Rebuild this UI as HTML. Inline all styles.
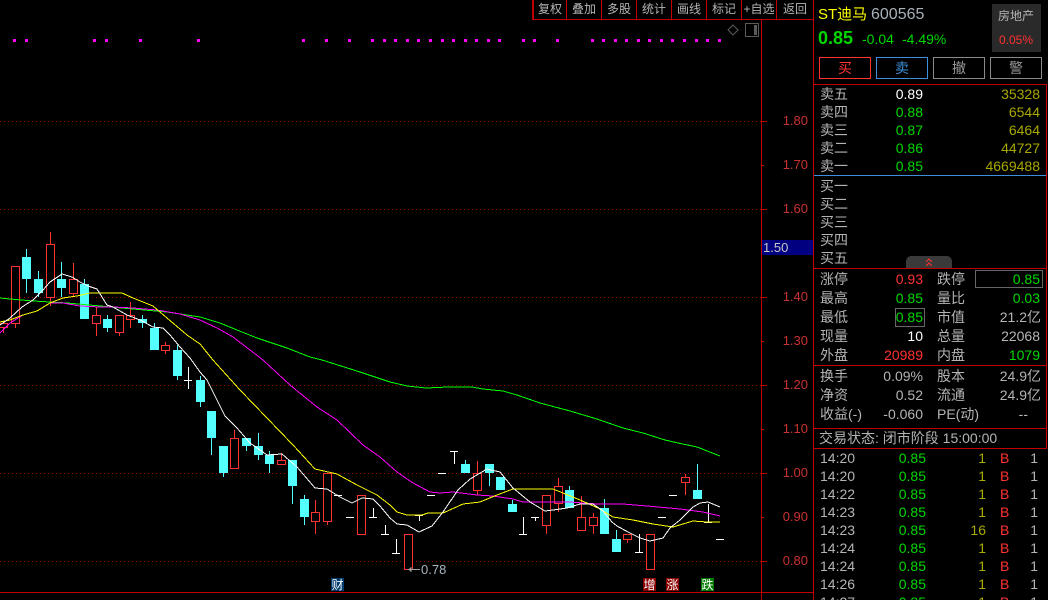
<!DOCTYPE html>
<html><head><meta charset="utf-8"><title>ST迪马</title>
<style>
html,body{margin:0;padding:0;background:#000;width:1048px;height:600px;overflow:hidden}
svg{display:block}
text{font-family:"Liberation Sans","WenQuanYi Zen Hei","Noto Sans CJK SC",sans-serif;font-size:14px;fill:#b4b4b4}
.e{text-anchor:end}.g{fill:#00d800}.r{fill:#ff3232}.y{fill:#a8a800}.w{fill:#fff}.c{text-anchor:middle}
.t text{font-size:12px;text-anchor:middle}
.a text{font-size:13px;fill:#c83232;text-anchor:end}
</style></head><body>
<svg width="1048" height="600" viewBox="0 0 1048 600" xmlns="http://www.w3.org/2000/svg">
<g shape-rendering="crispEdges">
<!-- grid -->
<path d="M0 121.5H761M0 209.5H761M0 297.5H761M0 385.5H761M0 473.5H761M0 561.5H761" stroke="#a00000" stroke-dasharray="1 3" fill="none"/>
<path d="M761 121.5h6M761 209.5h6M761 297.5h6M761 385.5h6M761 473.5h6M761 561.5h6M761 165.5h3M761 253.5h3M761 341.5h3M761 429.5h3M761 517.5h3" stroke="#c00000" fill="none"/>
<!-- frame -->
<path d="M532.5 0V19M533.5 0V19M566.5 0V19M601.5 0V19M636.5 0V19M671.5 0V19M706.5 0V19M741.5 0V19M776.5 0V19M532 19.5H813M761.5 19V600M0 592.5H813M813.5 0V600M814 84.5H1046M814 268.5H1046M814 365.5H1046M814 428.5H1046M814 448.5H1046M1046.5 84V449" stroke="#c00000" fill="none"/>
<path d="M814 175.5H1046" stroke="#3c8fd8" fill="none"/>
<!-- magenta dots -->
<path fill="#ff00ff" d="M13 39h3v3h-3zM25 39h3v3h-3zM93 39h3v3h-3zM105 39h3v3h-3zM139 39h3v3h-3zM197 39h3v3h-3zM302 39h3v3h-3zM325 39h3v3h-3zM348 39h3v3h-3zM371 39h3v3h-3zM383 39h3v3h-3zM394 39h3v3h-3zM406 39h3v3h-3zM417 39h3v3h-3zM429 39h3v3h-3zM441 39h3v3h-3zM452 39h3v3h-3zM464 39h3v3h-3zM475 39h3v3h-3zM487 39h3v3h-3zM498 39h3v3h-3zM522 39h3v3h-3zM533 39h3v3h-3zM556 39h3v3h-3zM591 39h3v3h-3zM602 39h3v3h-3zM614 39h3v3h-3zM625 39h3v3h-3zM637 39h3v3h-3zM648 39h3v3h-3zM660 39h3v3h-3zM671 39h3v3h-3zM683 39h3v3h-3zM695 39h3v3h-3zM706 39h3v3h-3zM718 39h3v3h-3z"/>
<!-- corner icon -->
<rect x="745.5" y="23.5" width="13" height="13" fill="none" stroke="#5a5a5a"/>
<rect x="754" y="25" width="3" height="10" fill="#5a5a5a"/>
<!-- red wicks -->
<path fill="none" stroke="#ff3232" d="M3.5 323V333M15.5 324V328M50.5 232V306M73.5 263V297M96.5 307V336M119.5 333V336M130.5 302V328M165.5 342V354M234.5 430V438M281.5 453V460M315.5 500V534M327.5 522V525M477.5 461V495M546.5 526V534M558.5 478V512M581.5 496V531M593.5 513V534M627.5 540V543M685.5 474V495"/>
<!-- cyan wicks -->
<path fill="none" stroke="#54ffff" d="M26.5 249V293M38.5 271V297M61.5 262V297M84.5 279V319M107.5 315V332M142.5 315V328M154.5 323V350M177.5 345V380M200.5 376V407M211.5 411V455M223.5 446V477M246.5 438V451M258.5 433V460M269.5 451V473M292.5 460V504M304.5 495V525M465.5 460V473M489.5 464V486M512.5 500V512M569.5 486V508M604.5 499V534M616.5 530V552M697.5 464V499"/>
<!-- cyan bodies -->
<path fill="#54ffff" d="M22 257h9v22h-9zM34 279h9v14h-9zM57 279h9v9h-9zM80 284h9v35h-9zM103 319h9v9h-9zM138 319h9v4h-9zM150 328h9v22h-9zM173 350h9v26h-9zM196 380h9v22h-9zM207 411h9v27h-9zM219 446h9v27h-9zM242 438h9v8h-9zM254 446h9v9h-9zM265 455h9v9h-9zM288 460h9v26h-9zM300 499h9v18h-9zM461 464h9v9h-9zM485 464h9v9h-9zM496 477h9v13h-9zM508 504h9v8h-9zM565 490h9v18h-9zM600 508h9v26h-9zM612 539h9v13h-9zM693 490h9v9h-9z"/>
<!-- red bodies: black interior -->
<path fill="#000" d="M-1.500 323.500h9v4h-9zM11.500 266.500h8v57h-8zM46.500 244.500h8v53h-8zM69.500 279.500h8v14h-8zM92.500 315.500h8v8h-8zM115.500 315.500h8v17h-8zM126.500 315.500h8v4h-8zM161.500 345.500h8v5h-8zM230.500 438.500h8v30h-8zM277.500 460.500h8v4h-8zM311.500 512.500h8v9h-8zM323.500 473.500h8v48h-8zM357.500 495.500h8v39h-8zM404.500 534.500h8v35h-8zM473.500 473.500h8v17h-8zM542.500 495.500h8v30h-8zM554.500 486.500h8v17h-8zM577.500 517.500h8v13h-8zM589.500 517.500h8v8h-8zM623.500 534.500h8v5h-8zM646.500 534.500h8v35h-8zM681.500 477.500h8v5h-8z"/>
<!-- red bodies: outline rings -->
<path fill="#ff3232" fill-rule="evenodd" d="M-2 323h10v5h-10zM-1 324h8v3h-8zM11 266h9v58h-9zM12 267h7v56h-7zM46 244h9v54h-9zM47 245h7v52h-7zM69 279h9v15h-9zM70 280h7v13h-7zM92 315h9v9h-9zM93 316h7v7h-7zM115 315h9v18h-9zM116 316h7v16h-7zM126 315h9v5h-9zM127 316h7v3h-7zM161 345h9v6h-9zM162 346h7v4h-7zM230 438h9v31h-9zM231 439h7v29h-7zM277 460h9v5h-9zM278 461h7v3h-7zM311 512h9v10h-9zM312 513h7v8h-7zM323 473h9v49h-9zM324 474h7v47h-7zM357 495h9v40h-9zM358 496h7v38h-7zM404 534h9v36h-9zM405 535h7v34h-7zM473 473h9v18h-9zM474 474h7v16h-7zM542 495h9v31h-9zM543 496h7v29h-7zM554 486h9v18h-9zM555 487h7v16h-7zM577 517h9v14h-9zM578 518h7v12h-7zM589 517h9v9h-9zM590 518h7v7h-7zM623 534h9v6h-9zM624 535h7v4h-7zM646 534h9v36h-9zM647 535h7v34h-7zM681 477h9v6h-9zM682 478h7v4h-7z"/>
<!-- white doji -->
<path fill="none" stroke="#fff" d="M188.500 367V389M184 380.500h8M334 495.500h8M346 517.500h8M373.500 508V517M369 517.500h8M385.500 525V534M381 534.500h8M396.500 539V553M392 553.500h8M415 515.500h8M419.500 515V521M427 495.500h8M438 473.500h8M450 451.500h8M454.500 451V464M523.500 517V535M519 534.500h8M531 517.500h8M535.500 517V521M639.500 534V553M635 552.500h8M658 517.500h8M669 495.500h8M708.500 504V522M704 522.500h8M716 539.500h8"/>
<!-- MA lines -->
<polyline fill="none" stroke="#00ff00" points="0,298 10,299 33,301 67,303 100,306 133,309 167,312 200,317 220,323 237,330 257,338 287,348 310,357 322,360 360,372 390,382 407,386 426,388 448,387 472,387 483,389 503,391 517,395 540,403 570,411 597,419 623,428 643,433 665,440 678,443 697,447 720,456"/>
<polyline fill="none" stroke="#ff00ff" points="0,333 10,323 23,315 37,311 50,303 63,303 80,306 100,307 113,307 133,308 157,310 180,314 200,320 217,328 233,337 250,350 263,360 290,385 317,407 337,420 363,445 380,457 397,472 413,483 430,492 440,493 453,492 477,495 493,496 513,499 523,502 570,502 597,504 623,504 647,506 680,509 703,512 720,516"/>
<polyline fill="none" stroke="#ffff00" points="0,322 10,320 23,315 37,311 50,303 63,298 77,296 90,293 122,293 133,298 153,306 167,318 187,335 200,344 213,360 240,390 267,418 293,445 315,469 337,474 357,485 377,495 390,505 397,512 407,515 422,515 428,513 443,513 463,504 480,502 497,495 513,489 553,489 563,493 580,500 598,508 613,517 633,520 653,524 673,527 693,521 707,522 720,522"/>
<polyline fill="none" stroke="#ffffff" points="0,325 10,318 22,307 33,300 43,290 50,282 62,274 72,277 80,282 88,286 97,289 107,305 113,307 127,315 140,320 153,327 163,328 170,335 180,347 190,358 200,372 207,380 217,400 225,416 237,428 250,443 267,455 282,454 297,467 315,488 327,489 340,497 352,503 362,498 373,499 380,506 390,518 397,524 407,525 419,532 432,526 443,512 458,490 470,479 487,469 500,472 513,488 530,502 545,511 553,510 567,508 580,504 593,504 603,511 612,522 617,526 628,532 640,538 650,541 663,538 670,528 680,520 693,507 700,503 708,502 720,507"/>
<!-- 1.50 tag -->
<rect x="762" y="240" width="51" height="15" fill="#000080"/>
<!-- arrow -->
<path fill="none" stroke="#a0a0a0" d="M408 569.500h12M409.500 568.500h2M410.500 567.500h1M409.500 570.500h2M410.500 571.500h1"/>
<!-- flags -->
<rect x="331" y="578" width="13" height="13" fill="#003a6e"/>
<rect x="643" y="578" width="13" height="13" fill="#8a0000"/>
<rect x="666" y="578" width="13" height="13" fill="#8a0000"/>
<rect x="701" y="578" width="13" height="13" fill="#007a00"/>
<!-- header box + buttons -->
<rect x="992" y="4" width="49" height="48" fill="#2a2a2a"/>
<rect x="819.500" y="57.500" width="51" height="21" fill="none" stroke="#ff3232"/>
<rect x="876.500" y="57.500" width="51" height="21" fill="none" stroke="#3c8fd8"/>
<rect x="933.500" y="57.500" width="51" height="21" fill="none" stroke="#8a8a8a"/>
<rect x="990.500" y="57.500" width="51" height="21" fill="none" stroke="#8a8a8a"/>
<!-- boxes -->
<rect x="975.500" y="270.500" width="67" height="17" fill="none" stroke="#666"/>
<rect x="895.500" y="308.500" width="29" height="18" fill="none" stroke="#666"/>
<!-- tab -->
<path d="M906 268V262q0-6 6-6h34q6 0 6 6v6z" fill="#3a3a3a"/>
<path d="M926 262l3-3 3 3M926 266l3-3 3 3" fill="none" stroke="#ff3232"/>
</g>
<path d="M733 25l5 5-5 5-5-5z" fill="none" stroke="#5a5a5a"/>
<!-- toolbar -->
<g class="t">
<text x="550" y="13">复权</text><text x="584" y="13">叠加</text><text x="619" y="13">多股</text><text x="654" y="13">统计</text><text x="689" y="13">画线</text><text x="724" y="13">标记</text><text x="759" y="13">+自选</text><text x="795" y="13">返回</text>
</g>
<!-- axis -->
<g class="a">
<text x="808" y="125">1.80</text><text x="808" y="169">1.70</text><text x="808" y="213">1.60</text><text x="808" y="301">1.40</text><text x="808" y="345">1.30</text><text x="808" y="389">1.20</text><text x="808" y="433">1.10</text><text x="808" y="477">1.00</text><text x="808" y="521">0.90</text><text x="808" y="565">0.80</text>
</g>
<text x="763" y="252" style="font-size:13px;fill:#c8c8c8">1.50</text>
<text x="421" y="574" style="font-size:13px;fill:#a8b4c0">0.78</text>
<text x="337.500" y="589" class="c w" style="font-size:12px">财</text>
<text x="649.500" y="589" class="c w" style="font-size:12px">增</text>
<text x="672.500" y="589" class="c w" style="font-size:12px">涨</text>
<text x="707.500" y="589" class="c w" style="font-size:12px">跌</text>
<!-- header -->
<text x="818" y="19" style="font-size:15px;fill:#ffff00">ST迪马</text>
<text x="871" y="19" style="font-size:16px;fill:#a8b0b8">600565</text>
<text x="818" y="44" class="g" style="font-size:18px;font-weight:bold">0.85</text>
<text x="862" y="44" class="g">-0.04</text>
<text x="902" y="44" class="g">-4.49%</text>
<text x="1016" y="20" class="c" style="font-size:12px">房地产</text>
<text x="1016" y="44" class="c r" style="font-size:12px">0.05%</text>
<text x="845" y="73" class="c r">买</text><text x="902" y="73" class="c" style="fill:#3c8fd8">卖</text><text x="959" y="73" class="c" style="fill:#999">撤</text><text x="1016" y="73" class="c" style="fill:#999">警</text>
<!-- order book -->
<text x="820" y="99">卖五</text><text x="923" y="99" class="e w">0.89</text><text x="1040" y="99" class="e y">35328</text>
<text x="820" y="117">卖四</text><text x="923" y="117" class="e g">0.88</text><text x="1040" y="117" class="e y">6544</text>
<text x="820" y="135">卖三</text><text x="923" y="135" class="e g">0.87</text><text x="1040" y="135" class="e y">6464</text>
<text x="820" y="153">卖二</text><text x="923" y="153" class="e g">0.86</text><text x="1040" y="153" class="e y">44727</text>
<text x="820" y="171">卖一</text><text x="923" y="171" class="e g">0.85</text><text x="1040" y="171" class="e y">4669488</text>
<text x="820" y="191">买一</text><text x="820" y="209">买二</text><text x="820" y="227">买三</text><text x="820" y="245">买四</text><text x="820" y="263">买五</text>
<!-- stats -->
<text x="820" y="284">涨停</text><text x="923" y="284" class="e r">0.93</text><text x="937" y="284">跌停</text><text x="1040" y="284" class="e g">0.85</text>
<text x="820" y="303">最高</text><text x="923" y="303" class="e g">0.85</text><text x="937" y="303">量比</text><text x="1040" y="303" class="e g">0.03</text>
<text x="820" y="322">最低</text><text x="923" y="322" class="e g">0.85</text><text x="937" y="322">市值</text><text x="1041" y="322" class="e">21.2亿</text>
<text x="820" y="341">现量</text><text x="923" y="341" class="e w">10</text><text x="937" y="341">总量</text><text x="1040" y="341" class="e">22068</text>
<text x="820" y="360">外盘</text><text x="923" y="360" class="e r">20989</text><text x="937" y="360">内盘</text><text x="1040" y="360" class="e g">1079</text>
<text x="820" y="381">换手</text><text x="923" y="381" class="e">0.09%</text><text x="937" y="381">股本</text><text x="1041" y="381" class="e">24.9亿</text>
<text x="820" y="400">净资</text><text x="923" y="400" class="e">0.52</text><text x="937" y="400">流通</text><text x="1041" y="400" class="e">24.9亿</text>
<text x="820" y="419">收益(-)</text><text x="923" y="419" class="e">-0.060</text><text x="937" y="419">PE(动)</text><text x="1028" y="419" class="e">--</text>
<text x="819" y="443">交易状态: 闭市阶段 15:00:00</text>
<!-- trades -->
<text x="820" y="463">14:20</text><text x="926" y="463" class="e g">0.85</text><text x="986" y="463" class="e y">1</text><text x="1000" y="463" class="r">B</text><text x="1038" y="463" class="e">1</text>
<text x="820" y="481">14:20</text><text x="926" y="481" class="e g">0.85</text><text x="986" y="481" class="e y">1</text><text x="1000" y="481" class="r">B</text><text x="1038" y="481" class="e">1</text>
<text x="820" y="499">14:22</text><text x="926" y="499" class="e g">0.85</text><text x="986" y="499" class="e y">1</text><text x="1000" y="499" class="r">B</text><text x="1038" y="499" class="e">1</text>
<text x="820" y="517">14:23</text><text x="926" y="517" class="e g">0.85</text><text x="986" y="517" class="e y">1</text><text x="1000" y="517" class="r">B</text><text x="1038" y="517" class="e">1</text>
<text x="820" y="535">14:23</text><text x="926" y="535" class="e g">0.85</text><text x="986" y="535" class="e y">16</text><text x="1000" y="535" class="r">B</text><text x="1038" y="535" class="e">1</text>
<text x="820" y="553">14:24</text><text x="926" y="553" class="e g">0.85</text><text x="986" y="553" class="e y">1</text><text x="1000" y="553" class="r">B</text><text x="1038" y="553" class="e">1</text>
<text x="820" y="571">14:24</text><text x="926" y="571" class="e g">0.85</text><text x="986" y="571" class="e y">1</text><text x="1000" y="571" class="r">B</text><text x="1038" y="571" class="e">1</text>
<text x="820" y="589">14:26</text><text x="926" y="589" class="e g">0.85</text><text x="986" y="589" class="e y">1</text><text x="1000" y="589" class="r">B</text><text x="1038" y="589" class="e">1</text>
<text x="820" y="607">14:27</text><text x="926" y="607" class="e g">0.85</text><text x="986" y="607" class="e y">1</text><text x="1000" y="607" class="r">B</text><text x="1038" y="607" class="e">1</text>
</svg>
</body></html>
